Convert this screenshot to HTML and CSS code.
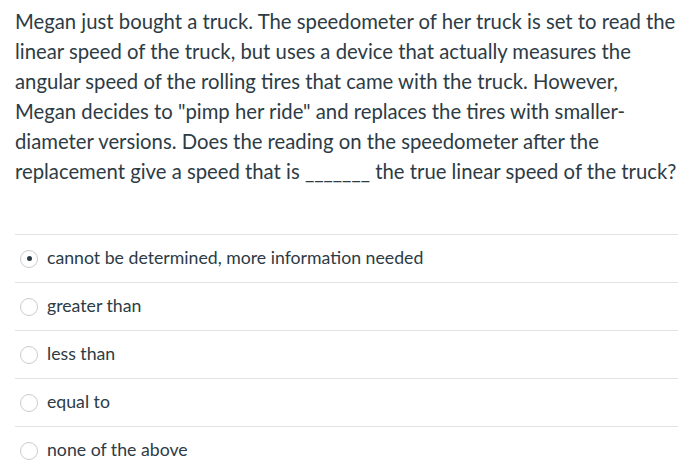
FILE: index.html
```html
<!DOCTYPE html>
<html>
<head>
<meta charset="utf-8">
<link rel="stylesheet" href="styles.css">
</head>
<body>
<div class="question">
  <p class="stem">Megan just bought a truck. The speedometer of her truck is set to read the linear speed of the truck, but uses a device that actually measures the angular speed of the rolling tires that came with the truck. However, Megan decides to "pimp her ride" and replaces the tires with smaller-diameter versions. Does the reading on the speedometer after the replacement give a speed that is <span class="blank">_______</span> the true linear speed of the truck?</p>
  <div class="answers">
    <label class="answer"><span class="radio checked"></span><span class="text">cannot be determined, more information needed</span></label>
    <label class="answer"><span class="radio"></span><span class="text">greater than</span></label>
    <label class="answer"><span class="radio"></span><span class="text">less than</span></label>
    <label class="answer"><span class="radio"></span><span class="text">equal to</span></label>
    <label class="answer"><span class="radio"></span><span class="text">none of the above</span></label>
  </div>
</div>
</body>
</html>
```
FILE: styles.css
```css
html, body {
  margin: 0;
  padding: 0;
  background: #ffffff;
}
body {
  font-family: Lato, "Liberation Sans", sans-serif;
  color: #2d3b45;
}
.question {
  padding: 6px 20px 0 15px;
}
.stem {
  margin: 0;
  font-size: 20.3px;
  line-height: 30px;
}
.answers {
  margin-top: 48px;
  margin-right: 2px;
}
.answer {
  display: flex;
  align-items: center;
  height: 47px;
  border-top: 1px solid #e2e2e2;
  padding-left: 5px;
}
.radio {
  width: 16px;
  height: 16px;
  border: 1px solid #c7cdd1;
  border-radius: 50%;
  box-sizing: content-box;
  display: flex;
  align-items: center;
  justify-content: center;
  margin-right: 9px;
  margin-top: 0;
}
.radio.checked::after {
  content: "";
  width: 5px;
  height: 5px;
  border-radius: 50%;
  background: #2d3b45;
}
.text {
  font-size: 17.7px;
  margin-top: -2px;
}
```
